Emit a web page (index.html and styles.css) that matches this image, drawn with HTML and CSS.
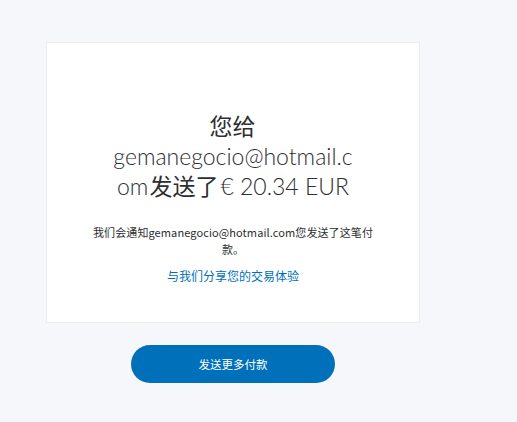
FILE: index.html
```html
<!DOCTYPE html>
<html lang="zh">
<head>
    <meta charset="UTF-8">
    <meta name="viewport" content="width=device-width, initial-scale=1.0">
    <title>付款已发送</title>
    <link rel="stylesheet" href="styles.css">
</head>
<body>
    <div class="wrap">
        <div class="card">
            <h1 class="title"><span class="cjk">您给</span><br>gemanegocio@hotmail.com<span class="cjk">发送了</span>€ 20.34 EUR</h1>
            <p class="note">我们会通知gemanegocio@hotmail.com您发送了这笔付款。</p>
            <a class="share" href="#">与我们分享您的交易体验</a>
        </div>
        <button class="more" type="button">发送更多付款</button>
    </div>
</body>
</html>
```

FILE: styles.css
```css
body {
    margin: 0;
    background-color: #f5f7fa;
    font-family: Lato, "Noto Sans CJK SC", sans-serif;
    color: #2c2e2f;
}

.wrap {
    width: 374px;
    margin-left: 46px;
    padding-top: 42px;
    display: flex;
    flex-direction: column;
    align-items: center;
}

.card {
    box-sizing: border-box;
    width: 374px;
    height: 281px;
    background-color: #fff;
    border: 1px solid #eaeced;
    padding: 68px 40px 0;
    text-align: center;
}

.title {
    width: 250px;
    margin: 0 auto;
    font-size: 23px;
    line-height: 30px;
    font-weight: 300;
    color: #2c2e2f;
    word-break: break-all;
}

.title .cjk {
    display: inline-block;
    height: 30px;
    margin: 0 2px 0 1px;
    font-weight: 400;
}

.note {
    margin: 23px 0 0;
    font-size: 11px;
    line-height: 17px;
    letter-spacing: 0.1px;
    font-family: "Noto Sans CJK SC", sans-serif;
    word-break: break-all;
}

.share {
    display: inline-block;
    margin-top: 9px;
    font-size: 12px;
    color: #0070ba;
    text-decoration: none;
    font-family: "Noto Sans CJK SC", sans-serif;
}

.more {
    margin-top: 22px;
    width: 204px;
    height: 38px;
    border: none;
    border-radius: 19px;
    background-color: #0070ba;
    color: #fff;
    font-size: 11.5px;
    font-family: "Noto Sans CJK SC", sans-serif;
    cursor: pointer;
}
```
